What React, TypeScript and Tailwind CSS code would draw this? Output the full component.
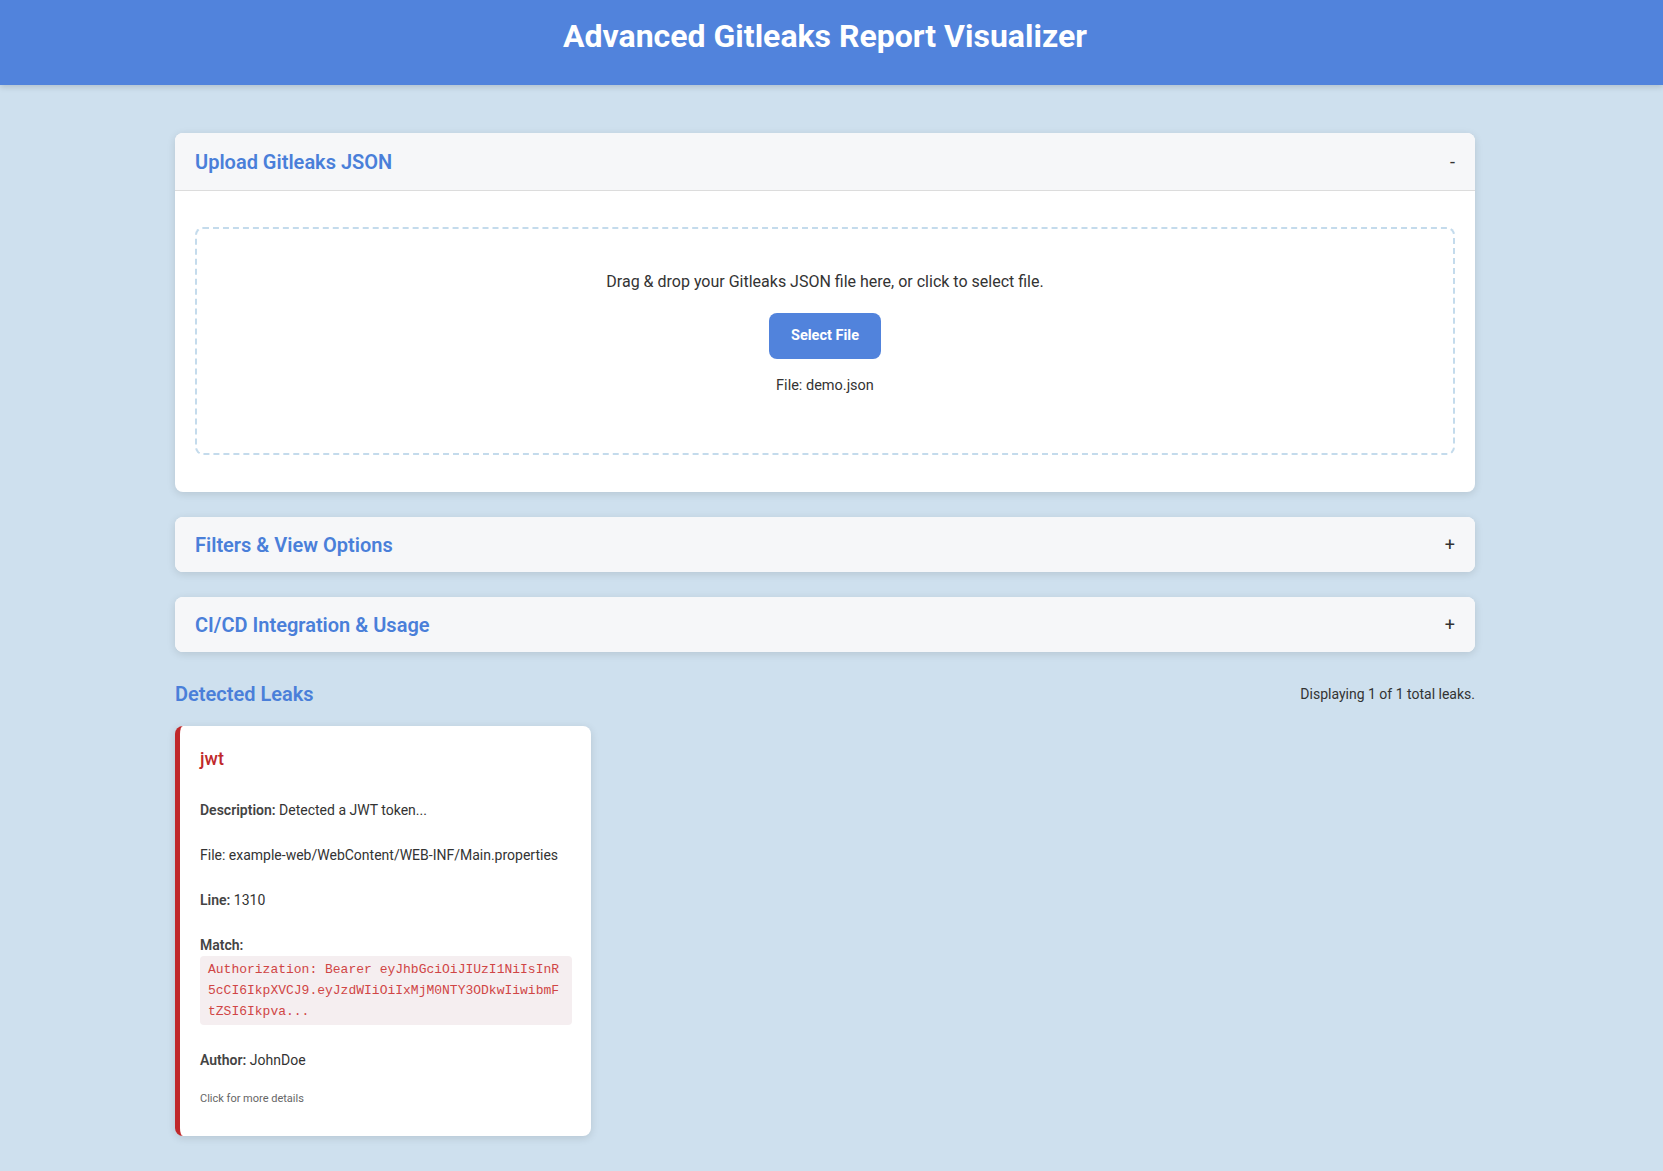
import { useState } from "react";

const leaks = [
  {
    rule: "jwt",
    description: "Detected a JWT token...",
    file: "example-web/WebContent/WEB-INF/Main.properties",
    line: 1310,
    match:
      "Authorization: Bearer eyJhbGciOiJIUzI1NiIsInR5cCI6IkpXVCJ9.eyJzdWIiOiIxMjM0NTY3ODkwIiwibmFtZSI6Ikpva...",
    author: "JohnDoe",
  },
];

function Section({
  title,
  open,
  onToggle,
  children,
}: {
  title: string;
  open: boolean;
  onToggle: () => void;
  children?: React.ReactNode;
}) {
  return (
    <div className="bg-white rounded-lg shadow-[0_2px_8px_rgba(0,0,0,0.12)] overflow-hidden">
      <button
        type="button"
        onClick={onToggle}
        className={`w-full px-5 flex items-center justify-between bg-[#f6f7f9] ${
          open ? "h-[58px] border-b border-[#dcdcdc]" : "h-[55px]"
        }`}
      >
        <span className="text-[20px] font-semibold text-[#4a7fd9]">{title}</span>
        <span className="text-[18px] text-[#333]">{open ? "-" : "+"}</span>
      </button>
      {open && children}
    </div>
  );
}

export default function App() {
  const [uploadOpen, setUploadOpen] = useState(true);
  const [filtersOpen, setFiltersOpen] = useState(false);
  const [ciOpen, setCiOpen] = useState(false);

  return (
    <div className="min-h-screen bg-[#cee0ee] font-['Roboto',sans-serif] text-[#333]">
      <header className="bg-[#5183dc] h-[85px] flex items-center pb-[14px] shadow-[0_2px_6px_rgba(0,0,0,0.15)]">
        <h1 className="w-full pr-[13px] text-center text-white text-[32px] font-bold">
          Advanced Gitleaks Report Visualizer
        </h1>
      </header>

      <div className="pr-[13px]">
        <main className="max-w-[1300px] mx-auto pt-12 pb-9">
          <Section
            title="Upload Gitleaks JSON"
            open={uploadOpen}
            onToggle={() => setUploadOpen(!uploadOpen)}
          >
            <div className="px-5 pt-[36px] pb-[37px]">
              <div className="border-2 border-dashed border-[#c4dbec] rounded-lg pt-[41px] pb-[57px] flex flex-col items-center">
                <p className="text-[16px] leading-[24px]">
                  Drag &amp; drop your Gitleaks JSON file here, or click to select file.
                </p>
                <button
                  type="button"
                  className="mt-[19px] w-[112px] h-[46px] rounded-lg bg-[#5183dc] text-white text-[14.5px] font-bold"
                >
                  Select File
                </button>
                <p className="mt-[17px] text-[14.5px] leading-[20px]">File: demo.json</p>
              </div>
            </div>
          </Section>

          <div className="mt-[25px]">
            <Section
              title="Filters & View Options"
              open={filtersOpen}
              onToggle={() => setFiltersOpen(!filtersOpen)}
            />
          </div>

          <div className="mt-[25px]">
            <Section
              title="CI/CD Integration & Usage"
              open={ciOpen}
              onToggle={() => setCiOpen(!ciOpen)}
            />
          </div>

          <div className="mt-[28px] flex items-center justify-between h-[28px]">
            <h2 className="text-[20px] font-semibold text-[#4a7fd9]">Detected Leaks</h2>
            <span className="text-[14px]">
              Displaying {leaks.length} of {leaks.length} total leaks.
            </span>
          </div>

          <div className="mt-[18px] grid grid-cols-3 gap-[26px]">
            {leaks.map((leak) => (
              <div
                key={leak.rule}
                className="bg-white rounded-lg border-l-[5px] border-[#c0282a] shadow-[0_2px_8px_rgba(0,0,0,0.12)] pl-[20px] pr-[19px] pt-[20px] pb-[28px] cursor-pointer"
              >
                <h3 className="text-[18px] leading-[25px] font-medium text-[#c0282a]">{leak.rule}</h3>
                <div className="mt-[29px] flex flex-col gap-[25px] text-[14px] leading-[20px]">
                  <p>
                    <span className="font-semibold text-[#444]">Description:</span> {leak.description}
                  </p>
                  <p>File: {leak.file}</p>
                  <p>
                    <span className="font-semibold text-[#444]">Line:</span> {leak.line}
                  </p>
                  <div>
                    <p className="font-semibold text-[#444]">Match:</p>
                    <pre className="mt-[1px] bg-[#f5eef0] rounded-[4px] px-[8px] py-[3px] font-['Liberation_Mono',monospace] text-[13px] leading-[21px] text-[#d04545] whitespace-pre-wrap break-all">
                      {leak.match}
                    </pre>
                  </div>
                  <p>
                    <span className="font-semibold text-[#444]">Author:</span> {leak.author}
                  </p>
                </div>
                <p className="mt-[21px] text-[11px] text-[#666]">Click for more details</p>
              </div>
            ))}
          </div>
        </main>
      </div>
    </div>
  );
}
